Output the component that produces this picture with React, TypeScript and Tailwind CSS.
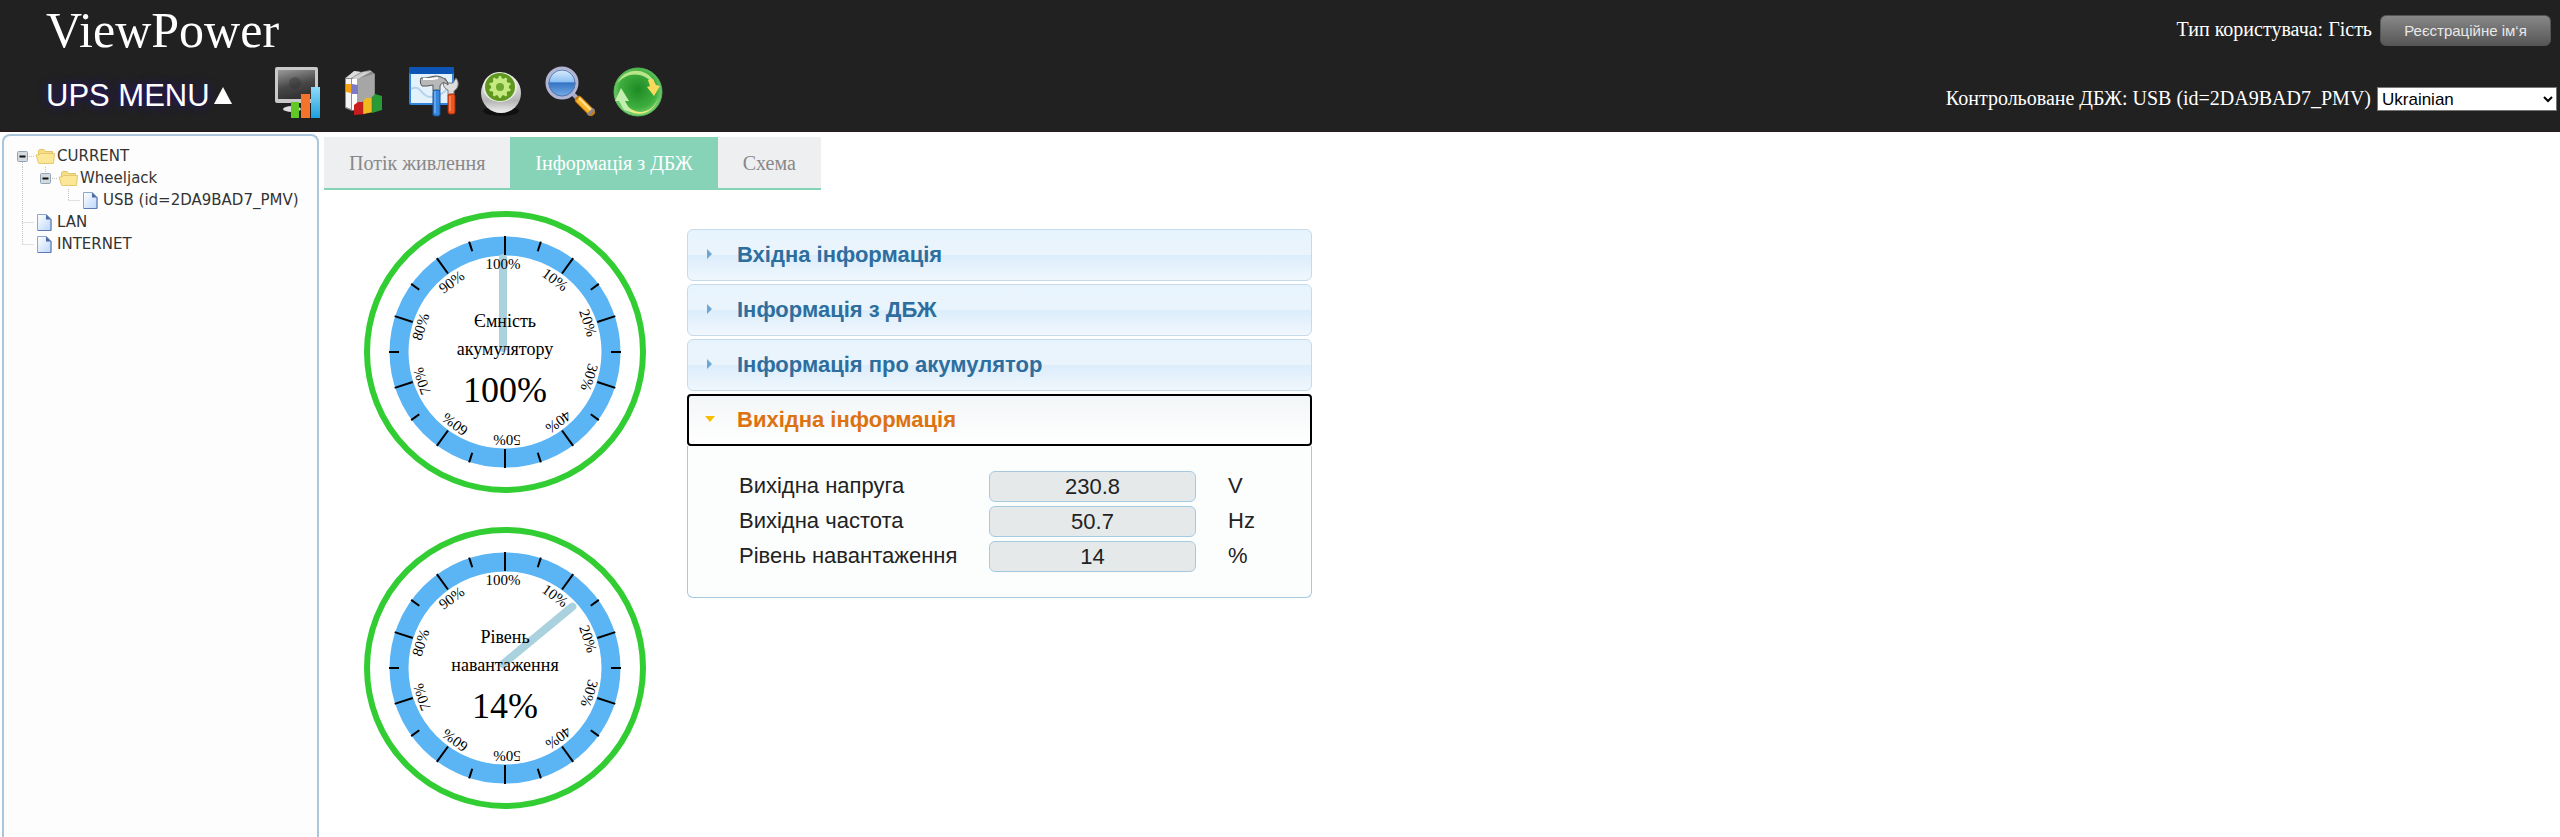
import { useState } from 'react'
import clsx from 'clsx'

type TreeRow = {
  label: string
  cells: ('bar' | 'blank' | 'tee' | 'elbow' | 'rootToggle' | 'childToggle')[]
  icon: 'folder' | 'file'
}

const treeRows: TreeRow[] = [
  { label: 'CURRENT', cells: ['rootToggle'], icon: 'folder' },
  { label: 'Wheeljack', cells: ['bar', 'childToggle'], icon: 'folder' },
  {
    label: 'USB (id=2DA9BAD7_PMV)',
    cells: ['bar', 'blank', 'elbow'],
    icon: 'file',
  },
  { label: 'LAN', cells: ['tee'], icon: 'file' },
  { label: 'INTERNET', cells: ['elbow'], icon: 'file' },
]

const tabs = ['Потік живлення', 'Інформація з ДБЖ', 'Схема']

const sections = [
  'Вхідна інформація',
  'Інформація з ДБЖ',
  'Інформація про акумулятор',
  'Вихідна інформація',
]

const outputFields = [
  { id: 'voltage', label: 'Вихідна напруга', value: '230.8', unit: 'V' },
  { id: 'frequency', label: 'Вихідна частота', value: '50.7', unit: 'Hz' },
  { id: 'load', label: 'Рівень навантаження', value: '14', unit: '%' },
]

const linePaths = {
  bar: 'M11.5 0V23',
  blank: '',
  tee: 'M11.5 0V23M11.5 11.5H23',
  elbow: 'M11.5 0V11.5M11.5 11.5H23',
  rootToggle: 'M11.5 17V23M18 11.5H23',
  childToggle: 'M11.5 0V6M18 11.5H23',
}

function TreeCell({ kind }: { kind: TreeRow['cells'][number] }) {
  const isToggle = kind === 'rootToggle' || kind === 'childToggle'
  return (
    <svg width="23" height="23" viewBox="0 0 23 23" aria-hidden="true">
      <path d={linePaths[kind]} stroke="#c4c4c4" strokeDasharray="1 1" />
      {isToggle && (
        <>
          <rect
            x="6.5"
            y="6.5"
            width="10"
            height="10"
            rx="1"
            fill="#d3dae0"
            stroke="#93a5b4"
          />
          <path d="M8.5 11.5H14.5" stroke="#111" strokeWidth="2" />
        </>
      )}
    </svg>
  )
}

function FolderIcon() {
  return (
    <svg width="23" height="23" viewBox="0 0 23 23" aria-hidden="true">
      <path
        d="M4.500 17.500V5.500L6 4.500H10L11.500 6.500H18.500V9"
        fill="#f6dc83"
        stroke="#e0c468"
      />
      <path
        d="M4.500 18L2 10H5L6.500 8.500H20.500L19.500 18.500H5Z"
        fill="#fbe795"
        stroke="#e3c96f"
      />
    </svg>
  )
}

function FileIcon() {
  return (
    <svg width="23" height="23" viewBox="0 0 23 23" aria-hidden="true">
      <defs>
        <linearGradient id="paper" x1="0" y1="0" x2="1" y2="1">
          <stop offset="0" stopColor="#fff" />
          <stop offset="1" stopColor="#bcd6fa" />
        </linearGradient>
      </defs>
      <path
        d="M3.500 3.500H12.500L17 8V19.500H3.500Z"
        fill="url(#paper)"
        stroke="#8fa6cf"
      />
      <path d="M12 3.500L17 8.500H12Z" fill="#4a68a3" />
      <path d="M17 8V19.500H4" fill="none" stroke="#5f7ab0" />
    </svg>
  )
}

function MonitorIcon() {
  return (
    <svg width="50" height="54" viewBox="0 0 50 54" aria-hidden="true">
      <defs>
        <linearGradient id="screen" x1="0" y1="0" x2="0.3" y2="1">
          <stop offset="0" stopColor="#9a9a9a" />
          <stop offset="0.6" stopColor="#484848" />
          <stop offset="1" stopColor="#333" />
        </linearGradient>
        <linearGradient id="blueBar" x1="0" y1="0" x2="0" y2="1">
          <stop offset="0" stopColor="#8fdcfa" />
          <stop offset="1" stopColor="#1ea0dc" />
        </linearGradient>
      </defs>
      <ellipse cx="20" cy="44" rx="9" ry="3" fill="#ddd" />
      <rect x="3" y="2" width="43" height="36" rx="2" fill="#c9c9c9" />
      <rect x="6" y="5" width="37" height="29" fill="url(#screen)" />
      <circle cx="23" cy="18" r="6" fill="#333" opacity="0.4" />
      <rect x="19" y="37" width="8" height="16" fill="#62c924" />
      <rect x="29" y="29" width="9" height="24" fill="#f5732a" />
      <rect x="39" y="22" width="9" height="31" fill="url(#blueBar)" />
    </svg>
  )
}

function BooksIcon() {
  return (
    <svg width="50" height="54" viewBox="0 0 50 54" aria-hidden="true">
      <path d="M5 13L15 6L21 7L30 5L35 9V40L12 46L5 43Z" fill="#8c8c8c" />
      <path d="M6 14H11V44L6 42Z" fill="#f4f4f4" />
      <path d="M12 14L17 13V44L12 45Z" fill="#fff" />
      <path d="M17 14L34 9V38L17 44Z" fill="#a6a6a6" />
      <path d="M14 6L21 7L11 13L6 13Z" fill="#ddd" />
      <path d="M23 7L32 6L18 14L12 13Z" fill="#cfcfcf" />
      <path d="M6 19H11V28L6 27Z" fill="#f5a011" />
      <path d="M12 19L18 20V29L12 29Z" fill="#7d7ac7" />
      <path d="M14 40L18 37L26 37V49L14 50Z" fill="#c91d1d" />
      <path d="M23 36L26 33L34 33V47L23 49Z" fill="#f0b91e" />
      <path d="M32 32L35 29L42 31V45L32 48Z" fill="#279c36" />
      <path d="M23 36V49M32 32V48" stroke="#7a3b12" opacity="0.4" />
    </svg>
  )
}

function ToolsIcon() {
  return (
    <svg width="52" height="54" viewBox="0 0 52 54" aria-hidden="true">
      <rect x="1" y="2" width="45" height="38" rx="2" fill="#2f86dc" />
      <rect x="1" y="2" width="45" height="7" rx="2" fill="#0d55b5" />
      <rect x="3" y="9" width="41" height="29" fill="#e3f1fa" />
      <path
        d="M3 24C15 18 12 36 28 31S36 20 44 22"
        fill="none"
        stroke="#b5d3ec"
        strokeWidth="2"
      />
      <path
        d="M37 13L40 18H45L48 13C52 18 50 24 46 26V31H40V25C35 23 34 18 37 13Z"
        fill="#ddd"
        stroke="#777"
      />
      <path
        d="M13 13H18L27 11C34 11 40 15 40 20C36 16 33 18 32 21V26H25V20L19 21H14C12 19 12 15 13 13Z"
        fill="#b8b8b8"
        stroke="#555"
      />
      <path d="M15 14H24L30 13" stroke="#fff" strokeWidth="2" fill="none" />
      <rect
        x="25"
        y="25"
        width="7"
        height="26"
        rx="2"
        fill="#3487df"
        stroke="#15529c"
      />
      <rect
        x="40"
        y="29"
        width="7"
        height="20"
        rx="2"
        fill="#f0551c"
        stroke="#9c2c08"
      />
      <path d="M27 26V48M42 31V46" stroke="#fff" opacity="0.5" />
    </svg>
  )
}

const gearTeeth = [0, 36, 72, 108, 144, 180, 216, 252, 288, 324]

function GearIcon() {
  return (
    <svg width="50" height="54" viewBox="0 0 50 54" aria-hidden="true">
      <defs>
        <linearGradient id="knob" x1="0" y1="0" x2="0" y2="1">
          <stop offset="0" stopColor="#f8f8f8" />
          <stop offset="0.7" stopColor="#b5b5b5" />
          <stop offset="1" stopColor="#f0f0f0" />
        </linearGradient>
      </defs>
      <ellipse cx="25" cy="46" rx="18" ry="5" fill="#000" opacity="0.5" />
      <circle cx="25" cy="28" r="20" fill="url(#knob)" />
      <ellipse cx="24" cy="22" rx="17" ry="15" fill="#e8eddd" />
      <ellipse cx="24" cy="22" rx="15" ry="14" fill="#5f971f" />
      {gearTeeth.map((angle) => (
        <path
          key={angle}
          d="M22 14L23 11H25L26 14Z"
          fill="#c4ea81"
          transform={`rotate(${angle} 24 22)`}
        />
      ))}
      <circle cx="24" cy="22" r="9" fill="#c4ea81" />
      <circle cx="24" cy="22" r="4" fill="#6fa831" />
    </svg>
  )
}

function MagnifierIcon() {
  return (
    <svg width="54" height="54" viewBox="0 0 54 54" aria-hidden="true">
      <defs>
        <linearGradient id="lens" x1="0" y1="0" x2="0" y2="1">
          <stop offset="0" stopColor="#e6f3ff" />
          <stop offset="0.45" stopColor="#8fc2f2" />
          <stop offset="0.5" stopColor="#3474c4" />
          <stop offset="1" stopColor="#7fb4ee" />
        </linearGradient>
      </defs>
      <path d="M29 29L35 35" stroke="#a9a9c4" strokeWidth="4" />
      <path
        d="M35 35L47 47"
        stroke="#c47d10"
        strokeWidth="8"
        strokeLinecap="round"
      />
      <path d="M34 34L46 46" stroke="#fbb62b" strokeWidth="6" />
      <path d="M35 33L47 45" stroke="#ffe49a" strokeWidth="2" />
      <path d="M44 50L50 44" stroke="#8a8a90" strokeWidth="3" />
      <circle
        cx="18"
        cy="18"
        r="15"
        fill="url(#lens)"
        stroke="#b1b4d2"
        strokeWidth="3"
      />
      <circle cx="18" cy="18" r="13" fill="none" stroke="#5877ad" />
    </svg>
  )
}

function RefreshIcon() {
  return (
    <svg width="54" height="54" viewBox="0 0 54 54" aria-hidden="true">
      <defs>
        <radialGradient id="ball" cx="0.5" cy="0.45" r="0.55">
          <stop offset="0" stopColor="#1d8a24" />
          <stop offset="0.7" stopColor="#3fae3f" />
          <stop offset="1" stopColor="#83d67c" />
        </radialGradient>
      </defs>
      <circle cx="26" cy="27" r="24" fill="url(#ball)" stroke="#54b653" />
      <path
        d="M5 19C11 3 33 1 42 16L41 19C31 6 14 7 5 19Z"
        fill="#b9e58a"
      />
      <path d="M36 15L41 14L44 20L48 21L42 31L35 22L38 21Z" fill="#fbd95f" />
      <path
        d="M46 33C40 51 19 51 12 36H9C16 54 41 53 46 33Z"
        fill="#f1ec7e"
      />
      <path d="M9 23L3 36H7L12 45L19 47L13 36H17Z" fill="#c2efb0" />
    </svg>
  )
}

const toolbar = [
  { name: 'Monitor', Icon: MonitorIcon },
  { name: 'Log', Icon: BooksIcon },
  { name: 'Configuration', Icon: ToolsIcon },
  { name: 'Control', Icon: GearIcon },
  { name: 'Search', Icon: MagnifierIcon },
  { name: 'Refresh', Icon: RefreshIcon },
]

const majorSteps = [10, 20, 30, 40, 50, 60, 70, 80, 90, 100]

function Gauge({ lines, percent }: { lines: string[]; percent: number }) {
  return (
    <svg
      width="284"
      height="284"
      viewBox="-142 -142 284 284"
      role="img"
      className="font-['Liberation_Serif',serif]"
    >
      <circle r="138" fill="#fff" stroke="#32cd32" strokeWidth="6" />
      <circle r="106" fill="none" stroke="#5bb5f5" strokeWidth="19" />
      <path
        d="M0 0V-90"
        stroke="#a9d2de"
        strokeWidth="8"
        strokeLinecap="round"
        transform={`translate(-2 -4) rotate(${percent * 3.6})`}
      />
      {majorSteps.map((step) => (
        <g key={step}>
          <path
            d="M0 -116V-97"
            stroke="#000"
            strokeWidth="2"
            transform={`rotate(${step * 3.6})`}
          />
          <path
            d="M0 -116V-106"
            stroke="#000"
            strokeWidth="2"
            transform={`rotate(${step * 3.6 + 18})`}
          />
          <text
            x="-2"
            y="-83"
            fontSize="15"
            textAnchor="middle"
            transform={`rotate(${step * 3.6})`}
          >
            {step}%
          </text>
        </g>
      ))}
      <text y="-25" fontSize="18" textAnchor="middle">
        {lines[0]}
      </text>
      <text y="3" fontSize="18" textAnchor="middle">
        {lines[1]}
      </text>
      <text y="50" fontSize="36" textAnchor="middle">
        {percent}%
      </text>
    </svg>
  )
}

function OutputPanel() {
  return (
    <div className="flex flex-col gap-1 rounded-b-md border border-t-0 border-[#a6c9e2] bg-[#fcfefe] px-[51px] py-[25px] text-[22px] text-[#222]">
      {outputFields.map(({ id, label, value, unit }) => (
        <div key={id} className="flex h-[31px] items-center leading-7">
          <label htmlFor={id} className="w-[250px] pb-px whitespace-nowrap">
            {label}
          </label>
          <input
            id={id}
            readOnly
            value={value}
            className="h-[31px] w-[207px] rounded-md border border-[#a6c9e2] bg-[#e6e9ea] text-center"
          />
          <span className="pb-px pl-8">{unit}</span>
        </div>
      ))}
    </div>
  )
}

export default function App() {
  const [activeTab, setActiveTab] = useState(1)
  const [openSection, setOpenSection] = useState(3)

  return (
    <div className="flex min-h-screen flex-col bg-white font-['Liberation_Serif',serif]">
      <header className="flex justify-between border-b border-[#2a1a1a] bg-[#212121] text-white">
        <div className="pl-[46px]">
          <h1 className="h-[64px] text-[50px] leading-[60px]">ViewPower</h1>
          <div className="flex h-[67px] items-start gap-10">
            <button className="flex h-[64px] items-center gap-1 font-['Liberation_Sans',sans-serif] text-[31px] [text-shadow:0_0_10px_#2a1090]">
              UPS MENU
              <svg width="18" height="18" viewBox="0 0 18 18">
                <path d="M9 0L18 17H0Z" fill="#fff" />
              </svg>
            </button>
            <nav className="flex gap-4 pt-px">
              {toolbar.map(({ name, Icon }) => (
                <button key={name} aria-label={name} className="w-[52px]">
                  <Icon />
                </button>
              ))}
            </nav>
          </div>
        </div>

        <div className="flex flex-col items-end pt-[15px] text-[20px] leading-7">
          <div className="flex items-start gap-2 pr-[9px]">
            <span>Тип користувача: Гість</span>
            <button className="h-[31px] w-[171px] rounded-md border border-[#555] bg-linear-to-b from-[#888] to-[#575757] font-['Liberation_Sans',sans-serif] text-[15px] text-[#e8e8e8]">
              Реєстраційне ім‘я
            </button>
          </div>
          <div className="flex items-start gap-[6px] pt-[38px] pr-[3px]">
            <span>Контрольоване ДБЖ: USB (id=2DA9BAD7_PMV)</span>
            <select
              aria-label="Language"
              className="mt-[3px] h-[24px] w-[180px] border border-[#767676] bg-white font-['Liberation_Sans',sans-serif] text-[17px] leading-5 text-black"
            >
              <option>Ukrainian</option>
            </select>
          </div>
        </div>
      </header>

      <div className="flex grow items-stretch pl-[2px]">
        <aside className="mt-[2px] w-[317px] shrink-0 rounded-t-lg border-2 border-b-0 border-[#a9c6dc] bg-[#fdfdfd] pt-[9px] pl-[7px]">
          <ul className="font-['DejaVu_Sans',sans-serif] text-[15px] text-[#333]">
            {treeRows.map(({ label, cells, icon }) => (
              <li key={label} className="flex h-[22px] items-center">
                {cells.map((kind, i) => (
                  <TreeCell key={`${label}-${i}`} kind={kind} />
                ))}
                {icon === 'folder' ? <FolderIcon /> : <FileIcon />}
                <a href="#" className="whitespace-nowrap">
                  {label}
                </a>
              </li>
            ))}
          </ul>
        </aside>

        <main className="grow pt-[5px] pl-[5px]">
          <div role="tablist" className="flex">
            {tabs.map((tab, i) => (
              <button
                key={tab}
                role="tab"
                aria-selected={activeTab === i}
                onClick={() => setActiveTab(i)}
                className={clsx(
                  'h-[53px] border-b-2 border-[#87d3b7] px-[25px] text-[20px]',
                  activeTab === i
                    ? 'bg-[#87d3b7] text-white'
                    : 'bg-[#eeeff1] text-[#888]'
                )}
              >
                {tab}
              </button>
            ))}
          </div>

          <div className="flex items-start gap-[40px] pt-5 pl-[39px]">
            <div className="flex flex-col gap-8">
              <Gauge lines={['Ємність', 'акумулятору']} percent={100} />
              <Gauge lines={['Рівень', 'навантаження']} percent={14} />
            </div>

            {/* Accordion */}
            <div className="mt-[19px] flex w-[625px] flex-col gap-[3px] font-['Liberation_Sans',sans-serif]">
              {sections.map((section, i) => {
                const isOpen = openSection === i
                return (
                  <section key={section}>
                    <h3>
                      <button
                        aria-expanded={isOpen}
                        onClick={() => setOpenSection(i)}
                        className={clsx(
                          'flex h-[52px] w-full items-center gap-[22px] pb-[2px] text-[22px] font-bold',
                          isOpen
                            ? 'rounded-sm border-2 border-black bg-linear-to-b from-[#f3f6f7] to-white pl-4 text-[#dd7212]'
                            : 'rounded-md border border-[#c5dbec] bg-[linear-gradient(#e8f4fd,#eaf4fd_50%,#dcedfb_51%,#f0f7fd)] pl-[17px] text-[#2e6e9e]'
                        )}
                      >
                        <svg width="10" height="10" viewBox="0 0 10 10">
                          {isOpen ? (
                            <path d="M0 2H10L5 8Z" fill="#f9bd01" />
                          ) : (
                            <path d="M2 0L7 5L2 10Z" fill="#6da8d5" />
                          )}
                        </svg>
                        {section}
                      </button>
                    </h3>
                    {isOpen && <OutputPanel />}
                  </section>
                )
              })}
            </div>
          </div>
        </main>
      </div>
    </div>
  )
}
